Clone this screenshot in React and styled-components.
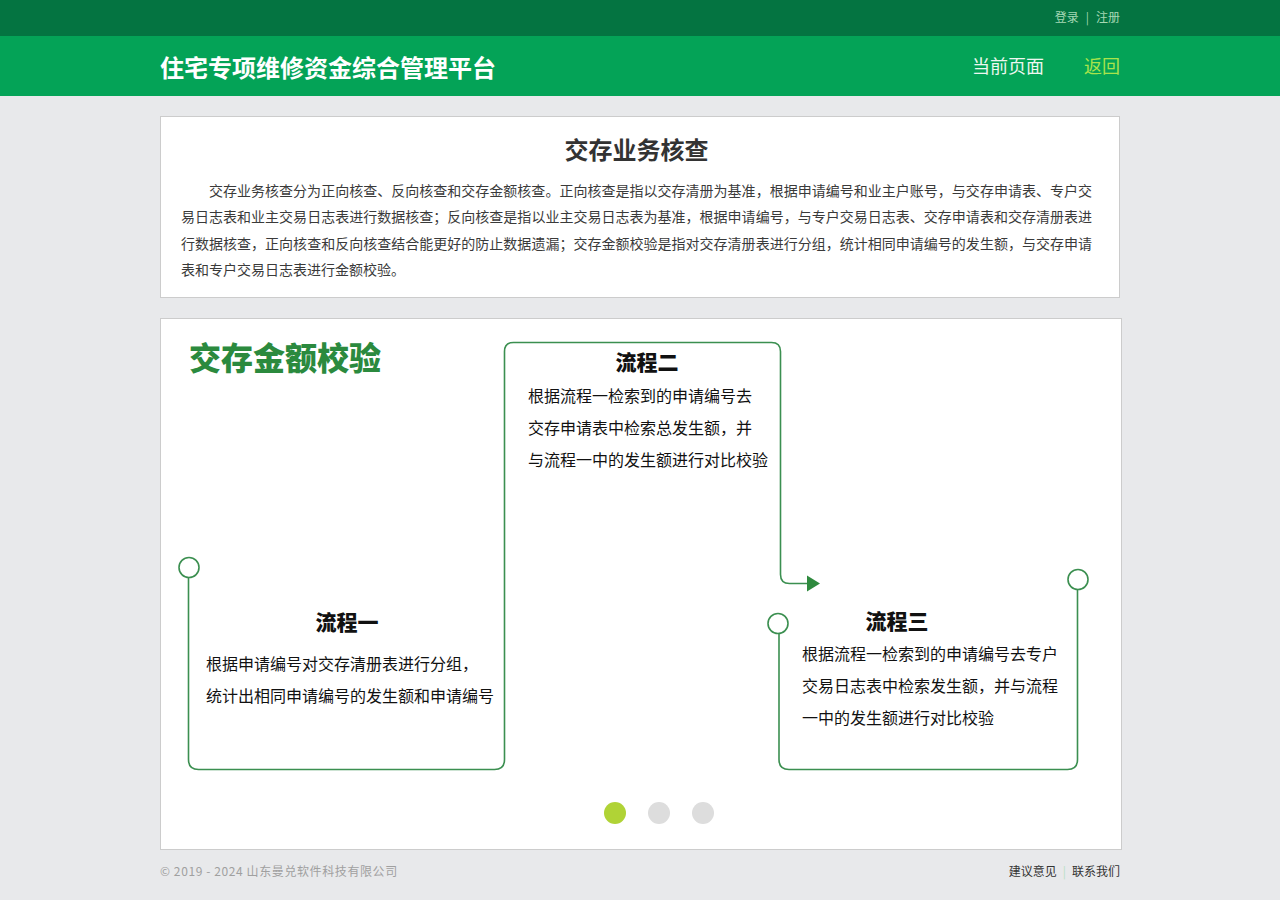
import React from "react";
import styled, { createGlobalStyle } from "styled-components";

const GlobalStyle = createGlobalStyle`
  html, body { margin: 0; padding: 0; }
  body {
    background: #e8e9eb;
    font-family: "Liberation Sans", "Noto Sans CJK SC", sans-serif;
    color: #333;
  }
  * { box-sizing: border-box; }
`;

const TopBar = styled.div`
  height: 36px;
  background: #047441;
`;

const Inner = styled.div`
  width: 960px;
  margin: 0 auto;
  height: 100%;
  display: flex;
  align-items: center;
  justify-content: ${(p) => p.$justify || "space-between"};
`;

const TopLinks = styled.div`
  display: flex;
  align-items: center;
  gap: 7px;
  font-size: 12px;
  color: #a6d8b4;
  font-family: "Noto Sans CJK SC", sans-serif;
  margin-top: -3px;
`;

const TopLink = styled.a`
  color: #a6d8b4;
  text-decoration: none;
`;

const HeaderBar = styled.div`
  height: 60px;
  background: #04a357;
`;

const Logo = styled.div`
  font-family: "Noto Sans CJK SC", sans-serif;
  font-weight: 700;
  font-size: 24px;
  color: #fff;
  margin-top: 0;
`;

const Nav = styled.nav`
  display: flex;
  gap: 40px;
  margin-top: -3px;
`;

const NavItem = styled.a`
  font-family: "Noto Sans CJK SC", sans-serif;
  font-size: 18px;
  color: ${(p) => (p.$active ? "#a9e34b" : "#eef7f0")};
  text-decoration: none;
`;

const Main = styled.main`
  width: 960px;
  margin: 20px auto 0;
  display: flex;
  flex-direction: column;
  gap: 20px;
`;

const Panel = styled.section`
  background: #fff;
  border: 1px solid #cccccc;
`;

const IntroPanel = styled(Panel)`
  padding: 14px 27px 14px 20px;
`;

const IntroTitle = styled.h2`
  margin: 0 0 10px;
  text-align: center;
  font-family: "Noto Sans CJK SC", sans-serif;
  font-size: 24px;
  line-height: 36px;
  font-weight: 700;
  color: #333;
`;

const IntroText = styled.p`
  margin: 0;
  font-family: "Noto Sans CJK SC", sans-serif;
  font-size: 14px;
  line-height: 26.4px;
  color: #3a3a3a;
  text-indent: 28px;
  text-align: justify;
`;

const FlowPanel = styled(Panel)`
  width: 962px;
  display: flex;
  flex-direction: column;
`;

const Canvas = styled.div`
  position: relative;
  height: 470px;
`;

const Connectors = styled.svg`
  position: absolute;
  left: 0;
  top: 0;
`;

const FlowHeading = styled.div`
  position: absolute;
  left: 28px;
  top: 17px;
  font-family: "Noto Sans CJK SC", sans-serif;
  font-weight: 900;
  font-size: 32px;
  line-height: 40px;
  color: #2b8a3e;
`;

const StepTitle = styled.div`
  position: absolute;
  left: ${(p) => p.$cx - 60}px;
  top: ${(p) => p.$cy - 15}px;
  width: 120px;
  text-align: center;
  font-family: "Noto Sans CJK SC", sans-serif;
  font-weight: 900;
  font-size: 21px;
  line-height: 30px;
  color: #111;
`;

const StepText = styled.div`
  position: absolute;
  left: ${(p) => p.$x}px;
  top: ${(p) => p.$y}px;
  font-family: "Noto Sans CJK SC", sans-serif;
  font-size: 16px;
  line-height: 32px;
  color: #111;
  white-space: nowrap;
`;

const StepLine = styled.div``;

const Dots = styled.div`
  display: flex;
  justify-content: center;
  gap: 22px;
  padding: 13px 0 25px 36px;
`;

const Dot = styled.span`
  width: 22px;
  height: 22px;
  border-radius: 50%;
  background: ${(p) => (p.$active ? "#b0d336" : "#dddddd")};
`;

const Footer = styled.footer`
  width: 960px;
  margin: 0 auto;
  height: 42px;
  display: flex;
  align-items: center;
  justify-content: space-between;
  font-family: "Noto Sans CJK SC", sans-serif;
  font-size: 12px;
`;

const Copyright = styled.div`
  color: #a0a0a0;
  letter-spacing: 0.6px;
`;

const FooterLinks = styled.div`
  display: flex;
  gap: 6px;
  align-items: center;
  color: #333;
`;

const FooterLink = styled.a`
  color: #333;
  text-decoration: none;
`;

const Sep = styled.span`
  color: #b8e0c4;
`;

const steps = [
  {
    title: "流程一",
    cx: 186,
    cy: 302,
    x: 45,
    y: 328,
    lines: ["根据申请编号对交存清册表进行分组，", "统计出相同申请编号的发生额和申请编号"],
  },
  {
    title: "流程二",
    cx: 486,
    cy: 42,
    x: 367,
    y: 60,
    lines: [
      "根据流程一检索到的申请编号去",
      "交存申请表中检索总发生额，并",
      "与流程一中的发生额进行对比校验",
    ],
  },
  {
    title: "流程三",
    cx: 736,
    cy: 301,
    x: 641,
    y: 318,
    lines: [
      "根据流程一检索到的申请编号去专户",
      "交易日志表中检索发生额，并与流程",
      "一中的发生额进行对比校验",
    ],
  },
];

const GREEN = "#3b8f50";

function FlowConnectors() {
  return (
    <Connectors width="960" height="470" viewBox="0 0 960 470">
      <g fill="none" stroke={GREEN} strokeWidth="1.6">
        <circle cx="28" cy="248.5" r="10" />
        <path d="M27.5 258.5 V440.5 Q27.5 450.5 37.5 450.5 H333.5 Q343.5 450.5 343.5 440.5 V32.5 Q343.5 23.5 352.5 23.5 H610.5 Q619.5 23.5 619.5 32.5 V255.5 Q619.5 264.5 628.5 264.5 H647" />
        <circle cx="617" cy="304.5" r="10" />
        <path d="M618 314.5 V440.5 Q618 450.5 628 450.5 H906.5 Q916.5 450.5 916.5 440.5 V270.5" />
        <circle cx="917" cy="260.5" r="10" />
      </g>
      <polygon points="646,256.5 659,264.5 646,272.5" fill="#2f8a3e" />
    </Connectors>
  );
}

export default function App() {
  return (
    <>
      <GlobalStyle />
      <TopBar>
        <Inner $justify="flex-end">
          <TopLinks>
            <TopLink href="#">登录</TopLink>
            <span>|</span>
            <TopLink href="#">注册</TopLink>
          </TopLinks>
        </Inner>
      </TopBar>
      <HeaderBar>
        <Inner>
          <Logo>住宅专项维修资金综合管理平台</Logo>
          <Nav>
            <NavItem href="#">当前页面</NavItem>
            <NavItem href="#" $active>
              返回
            </NavItem>
          </Nav>
        </Inner>
      </HeaderBar>
      <Main>
        <IntroPanel>
          <IntroTitle>交存业务核查</IntroTitle>
          <IntroText>
            交存业务核查分为正向核查、反向核查和交存金额核查。正向核查是指以交存清册为基准，根据申请编号和业主户账号，与交存申请表、专户交易日志表和业主交易日志表进行数据核查；反向核查是指以业主交易日志表为基准，根据申请编号，与专户交易日志表、交存申请表和交存清册表进行数据核查，正向核查和反向核查结合能更好的防止数据遗漏；交存金额校验是指对交存清册表进行分组，统计相同申请编号的发生额，与交存申请表和专户交易日志表进行金额校验。
          </IntroText>
        </IntroPanel>
        <FlowPanel>
          <Canvas>
            <FlowConnectors />
            <FlowHeading>交存金额校验</FlowHeading>
            {steps.map((s) => (
              <React.Fragment key={s.title}>
                <StepTitle $cx={s.cx} $cy={s.cy}>
                  {s.title}
                </StepTitle>
                <StepText $x={s.x} $y={s.y}>
                  {s.lines.map((l) => (
                    <StepLine key={l}>{l}</StepLine>
                  ))}
                </StepText>
              </React.Fragment>
            ))}
          </Canvas>
          <Dots>
            <Dot $active />
            <Dot />
            <Dot />
          </Dots>
        </FlowPanel>
      </Main>
      <Footer>
        <Copyright>© 2019 - 2024 山东曼兑软件科技有限公司</Copyright>
        <FooterLinks>
          <FooterLink href="#">建议意见</FooterLink>
          <Sep>|</Sep>
          <FooterLink href="#">联系我们</FooterLink>
        </FooterLinks>
      </Footer>
    </>
  );
}
